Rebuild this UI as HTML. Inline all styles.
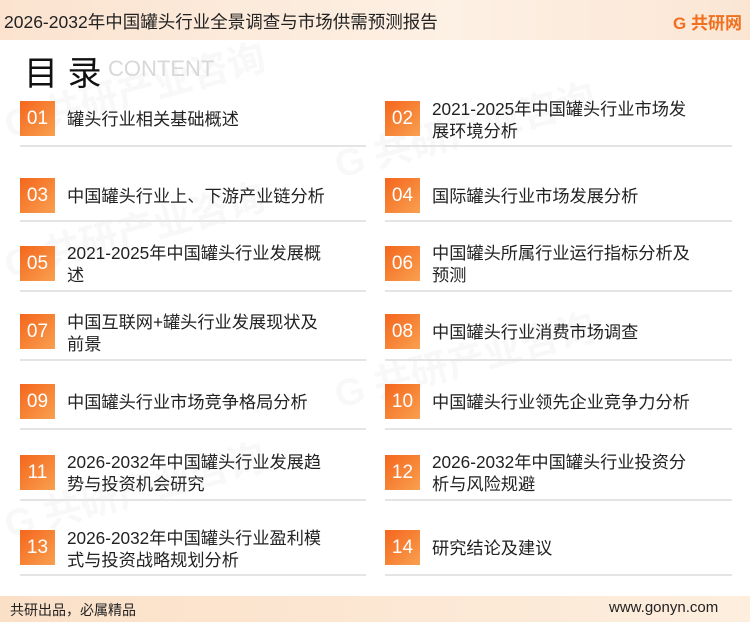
<html><head><style>
body{margin:0;width:750px;height:622px;position:relative;background:#fff;font-family:"Liberation Sans","Noto Sans CJK SC",sans-serif;overflow:hidden;color:#222}
.hd{position:absolute;left:0;top:0;width:750px;height:40px;background:linear-gradient(90deg,#fbe3cf,#fdf0e4 60%,#fbe6d4)}
.hd .t{position:absolute;left:4px;top:9px;font-size:17.5px;color:#222}
.logo{position:absolute;right:8px;top:9px;font-size:17px;font-weight:bold;color:#f07020}
.ft{position:absolute;left:0;top:596px;width:750px;height:26px;background:linear-gradient(90deg,#fbe0c8,#fdeede)}
.ft span{position:absolute;top:4px;font-size:14px}
.ttl{position:absolute;left:24px;top:46px;font-size:34px;color:#111}
.ct{position:absolute;left:108px;top:56px;font-size:22px;color:#d8d8d8}
.b{position:absolute;width:35px;height:35px;background:linear-gradient(135deg,#f4661c,#f9a050);color:#fff;font-size:19px;line-height:35px;text-align:center}
.x{position:absolute;font-size:17.2px;line-height:22px;width:264px}
.l{position:absolute;height:2px;background:#e4e4e4}
.wm{position:absolute;font-size:38px;font-weight:bold;color:#f8f8f8;transform:rotate(-15deg)}
</style></head><body>
<div class="wm" style="left:0;top:60px">G 共研产业咨询</div>
<div class="wm" style="left:330px;top:100px">G 共研产业咨询</div>
<div class="wm" style="left:0;top:200px">G 共研产业咨询</div>
<div class="wm" style="left:330px;top:330px">G 共研产业咨询</div>
<div class="wm" style="left:0;top:460px">G 共研产业咨询</div>
<div class="hd"><div class="t">2026-2032年中国罐头行业全景调查与市场供需预测报告</div><div class="logo">G 共研网</div></div>
<div class="ttl">目 录</div><div class="ct">CONTENT</div>

<div class="b" style="left:20px;top:101px">01</div><div class="x" style="left:67px;top:108px">罐头行业相关基础概述</div>
<div class="b" style="left:385px;top:101px">02</div><div class="x" style="left:432px;top:98px">2021-2025年中国罐头行业市场发展环境分析</div>
<div class="l" style="left:20px;top:145px;width:346px"></div><div class="l" style="left:385px;top:145px;width:347px"></div>

<div class="b" style="left:20px;top:178px">03</div><div class="x" style="left:67px;top:185px">中国罐头行业上、下游产业链分析</div>
<div class="b" style="left:385px;top:178px">04</div><div class="x" style="left:432px;top:185px">国际罐头行业市场发展分析</div>
<div class="l" style="left:20px;top:220px;width:346px"></div><div class="l" style="left:385px;top:220px;width:347px"></div>

<div class="b" style="left:20px;top:246px">05</div><div class="x" style="left:67px;top:242px">2021-2025年中国罐头行业发展概述</div>
<div class="b" style="left:385px;top:246px">06</div><div class="x" style="left:432px;top:242px">中国罐头所属行业运行指标分析及预测</div>
<div class="l" style="left:20px;top:290px;width:346px"></div><div class="l" style="left:385px;top:290px;width:347px"></div>

<div class="b" style="left:20px;top:314px">07</div><div class="x" style="left:67px;top:311px">中国互联网+罐头行业发展现状及前景</div>
<div class="b" style="left:385px;top:314px">08</div><div class="x" style="left:432px;top:321px">中国罐头行业消费市场调查</div>
<div class="l" style="left:20px;top:359px;width:346px"></div><div class="l" style="left:385px;top:359px;width:347px"></div>

<div class="b" style="left:20px;top:384px">09</div><div class="x" style="left:67px;top:391px">中国罐头行业市场竞争格局分析</div>
<div class="b" style="left:385px;top:384px">10</div><div class="x" style="left:432px;top:391px">中国罐头行业领先企业竞争力分析</div>
<div class="l" style="left:20px;top:428px;width:346px"></div><div class="l" style="left:385px;top:428px;width:347px"></div>

<div class="b" style="left:20px;top:455px">11</div><div class="x" style="left:67px;top:451px">2026-2032年中国罐头行业发展趋势与投资机会研究</div>
<div class="b" style="left:385px;top:455px">12</div><div class="x" style="left:432px;top:451px">2026-2032年中国罐头行业投资分析与风险规避</div>
<div class="l" style="left:20px;top:499px;width:346px"></div><div class="l" style="left:385px;top:499px;width:347px"></div>

<div class="b" style="left:20px;top:530px">13</div><div class="x" style="left:67px;top:527px">2026-2032年中国罐头行业盈利模式与投资战略规划分析</div>
<div class="b" style="left:385px;top:530px">14</div><div class="x" style="left:432px;top:537px">研究结论及建议</div>
<div class="l" style="left:20px;top:574px;width:346px"></div><div class="l" style="left:385px;top:574px;width:347px"></div>

<div class="ft"><span style="left:10px">共研出品，必属精品</span><span style="left:609px;font-size:15px;top:3px">www.gonyn.com</span></div>
</body></html>
